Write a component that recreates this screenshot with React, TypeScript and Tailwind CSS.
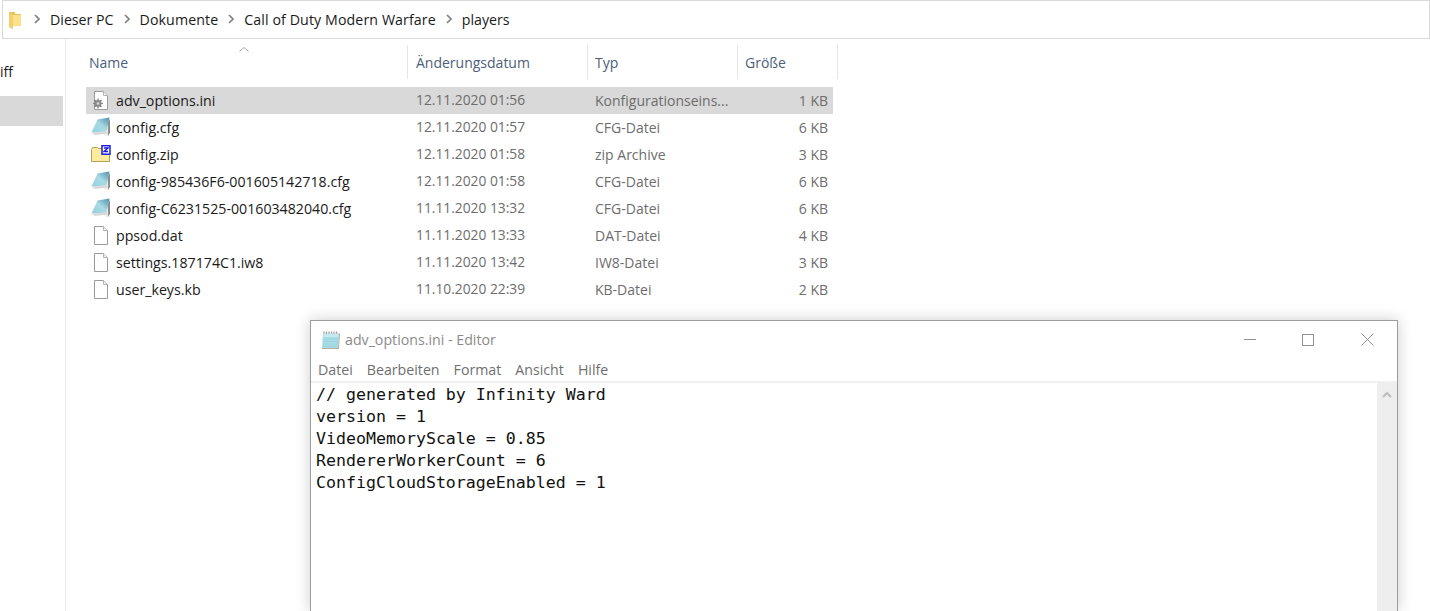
import React from 'react';

type FileKind = 'ini' | 'cfg' | 'zip' | 'blank';

const files: { name: string; date: string; type: string; size: string; kind: FileKind }[] = [
  { name: 'adv_options.ini', date: '12.11.2020 01:56', type: 'Konfigurationseins...', size: '1 KB', kind: 'ini' },
  { name: 'config.cfg', date: '12.11.2020 01:57', type: 'CFG-Datei', size: '6 KB', kind: 'cfg' },
  { name: 'config.zip', date: '12.11.2020 01:58', type: 'zip Archive', size: '3 KB', kind: 'zip' },
  { name: 'config-985436F6-001605142718.cfg', date: '12.11.2020 01:58', type: 'CFG-Datei', size: '6 KB', kind: 'cfg' },
  { name: 'config-C6231525-001603482040.cfg', date: '11.11.2020 13:32', type: 'CFG-Datei', size: '6 KB', kind: 'cfg' },
  { name: 'ppsod.dat', date: '11.11.2020 13:33', type: 'DAT-Datei', size: '4 KB', kind: 'blank' },
  { name: 'settings.187174C1.iw8', date: '11.11.2020 13:42', type: 'IW8-Datei', size: '3 KB', kind: 'blank' },
  { name: 'user_keys.kb', date: '11.10.2020 22:39', type: 'KB-Datei', size: '2 KB', kind: 'blank' },
];

const editorLines = [
  '// generated by Infinity Ward',
  'version = 1',
  'VideoMemoryScale = 0.85',
  'RendererWorkerCount = 6',
  'ConfigCloudStorageEnabled = 1',
];

const Chevron = () => (
  <svg width="6" height="10" viewBox="0 0 6 10" className="mx-[10px] shrink-0">
    <path d="M1 1l4 4-4 4" fill="none" stroke="#808080" strokeWidth="1.7" />
  </svg>
);

const FolderIcon = () => (
  <svg width="14" height="18" viewBox="0 0 14 18">
    <path d="M1 1h6v2h6v12H5v3l-4-2z" fill="#e9c35c" />
    <path d="M5 4h8v11H5z" fill="#fde08a" />
    <path d="M1 1l4 3v14l-4-2z" fill="#f5cf6b" />
  </svg>
);

// tilted notepad used for the .cfg files
const PadIcon = () => (
  <svg width="20" height="20" viewBox="0 0 20 20">
    <defs>
      <linearGradient id="pad" x1="0" y1="1" x2="1" y2="0">
        <stop offset="0" stopColor="#8fd0dc" />
        <stop offset="0.5" stopColor="#a9dbe6" />
        <stop offset="1" stopColor="#4d8eaa" />
      </linearGradient>
    </defs>
    <path d="M12 16l3 3.500 2.500-1L18.500 4l-3 2z" fill="#f2efe2" />
    <path d="M17 5l2-3v14l-2 3z" fill="#8d8d8d" />
    <path d="M.5 15.500L6.500 2.500 18.500.5 15.500 14.500z" fill="url(#pad)" />
    <path d="M.5 15.500l15-1 1.500 2-13 1.500z" fill="#d8d8d8" />
  </svg>
);

// upright notepad of the Editor title bar
const EditorIcon = () => (
  <svg width="21" height="20" viewBox="0 0 21 20">
    <path d="M3 3h16l-1 15H2z" fill="#a9dde6" />
    <path d="M3 3h16l-.3 4H2.700z" fill="#c6e9ee" />
    <path d="M3 9h15M3 11.500h15M3 14h15M2.500 16.500h15" stroke="#9ad4df" strokeWidth="1" />
    <path d="M4 1.500v2M6.500 1.500v2M9 1.500v2M11.500 1.500v2M14 1.500v2M16.500 1.500v2" stroke="#9a9a9a" strokeWidth="1.200" />
    <path d="M19 3l1 .5L19 19H2v-1h16z" fill="#b5ae9a" />
  </svg>
);

const PageIcon = ({ gear }: { gear?: boolean }) => (
  <svg width="16" height="19" viewBox="0 0 16 19">
    <path d="M1.500 .5h9l4 4v14h-13z" fill="#fff" stroke="#9b9b9b" />
    <path d="M10.500 .5v4h4" fill="#f1f1f1" stroke="#b5b5b5" />
    {gear && (
      <g>
        <circle cx="5" cy="12.500" r="3.600" fill="#8d8d8d" />
        <circle cx="5" cy="12.500" r="1.300" fill="#d9d9d9" />
        <path d="M5 7.600v2M5 15.400v2M.1 12.500h2M7.900 12.500h2M1.500 9l1.500 1.500M8.500 16L7 14.500M8.500 9L7 10.500M1.500 16L3 14.500" stroke="#7a7a7a" strokeWidth="1.200" />
      </g>
    )}
  </svg>
);

const ZipIcon = () => (
  <svg width="20" height="18" viewBox="0 0 20 18">
    <path d="M.5 4.500l1-2h5l1 1h11v13H.5z" fill="#fbeb9c" stroke="#b3a15a" />
    <rect x="11" y=".7" width="8" height="8.500" fill="#fff" stroke="#1c1ce0" strokeWidth="1.500" />
    <path d="M13 3h4l-4 3.500h4" fill="none" stroke="#1c1ce0" strokeWidth="1.400" />
  </svg>
);

const FileIcon = ({ kind }: { kind: FileKind }) => {
  if (kind === 'cfg') return <PadIcon />;
  if (kind === 'zip') return <ZipIcon />;
  return <PageIcon gear={kind === 'ini'} />;
};

const HeaderCell = ({ label, className }: { label: string; className: string }) => (
  <div className={`flex h-[34px] items-center border-r border-[#e5e5e5] text-[14px] text-[#4c607a] ${className}`}>{label}</div>
);

const EditorWindow = () => (
  <div className="absolute left-[310px] top-[320px] flex h-[291px] w-[1088px] flex-col border-x border-t border-[#9c9c9c] bg-white shadow-[0_0_14px_rgba(0,0,0,0.2)]">
    <div className="flex h-[37px] shrink-0 items-center pl-[9px]">
      <EditorIcon />
      <span className="ml-[4px] text-[14.2px] text-[#8b8b8b]">adv_options.ini - Editor</span>
      <div className="ml-auto flex items-center">
        <div className="h-px w-[12px] bg-[#8f8f8f]" />
        <div className="ml-[46px] h-[12px] w-[12px] border border-[#8f8f8f]" />
        <svg width="13" height="13" viewBox="0 0 13 13" className="ml-[47px] mr-[23px]">
          <path d="M.5.5l12 12M12.500.5l-12 12" stroke="#8f8f8f" strokeWidth="1" fill="none" />
        </svg>
      </div>
    </div>
    <div className="flex h-[23px] shrink-0 items-center gap-[14px] pl-[7px] pt-[1px] text-[14.2px] text-[#6f6f6f]">
      <span>Datei</span>
      <span>Bearbeiten</span>
      <span>Format</span>
      <span>Ansicht</span>
      <span>Hilfe</span>
    </div>
    <div className="flex min-h-0 flex-1 border-t-2 border-[#f0f0f0]">
      <div className="flex-1 pl-[5px] pt-[1px] font-['DejaVu_Sans_Mono',monospace] text-[16.6px] leading-[22px] text-[#111]">
        {editorLines.map((line) => (
          <div key={line} className="whitespace-pre">{line}</div>
        ))}
      </div>
      <div className="flex w-[20px] shrink-0 justify-center bg-[#eeeeee] pt-[8px]">
        <svg width="10" height="7" viewBox="0 0 10 7">
          <path d="M1 6l4-4 4 4" fill="none" stroke="#bcbcbc" strokeWidth="2" />
        </svg>
      </div>
    </div>
  </div>
);

export default function App() {
  return (
    <div className="relative h-[611px] w-[1430px] overflow-hidden bg-white font-['Open_Sans',sans-serif] text-[#1a1a1a]">
      <div className="ml-[2px] flex h-[39px] items-center border border-[#d9d9d9] pl-[5px] text-[14.2px]">
        <FolderIcon />
        <div className="ml-[2px] flex items-center">
          <Chevron />
          <span>Dieser PC</span>
          <Chevron />
          <span className="tracking-[0.1px]">Dokumente</span>
          <Chevron />
          <span className="tracking-[0.1px]">Call of Duty Modern Warfare</span>
          <Chevron />
          <span>players</span>
        </div>
      </div>

      <div className="flex h-[572px]">
        <div className="w-[66px] shrink-0 border-r border-[#ececec] pt-[23px] text-[14px]">
          <div className="h-[34px] leading-[20px]">iff</div>
          <div className="h-[30px] w-[63px] bg-[#d9d9d9]" />
        </div>

        <div className="flex-1 pl-[20px] pt-[6px]">
          <div className="relative flex">
            <svg width="10" height="5" viewBox="0 0 10 5" className="absolute left-[153px] top-[2px]">
              <path d="M.5 4.500L5 .5l4.500 4" fill="none" stroke="#a8a8a8" />
            </svg>
            <HeaderCell label="Name" className="w-[322px] pl-[3px]" />
            <HeaderCell label="Änderungsdatum" className="w-[180px] pl-[8px]" />
            <HeaderCell label="Typ" className="w-[150px] pl-[7px]" />
            <HeaderCell label="Größe" className="w-[100px] pl-[7px]" />
          </div>

          <div className="mt-[8px] w-[747px]">
            {files.map((file, i) => (
              <div key={file.name} className={`flex h-[27px] items-center text-[14.2px] ${i === 0 ? 'bg-[#d9d9d9]' : ''}`}>
                <div className="flex w-[330px] items-center">
                  <div className="flex w-[30px] justify-center">
                    <FileIcon kind={file.kind} />
                  </div>
                  <span>{file.name}</span>
                </div>
                <span className="w-[179px] text-[13.8px] text-[#6d6d6d]">{file.date}</span>
                <span className="w-[151px] text-[14px] text-[#6d6d6d]">{file.type}</span>
                <span className="flex-1 pr-[5px] text-right text-[14px] text-[#6d6d6d]">{file.size}</span>
              </div>
            ))}
          </div>
        </div>
      </div>

      <EditorWindow />
    </div>
  );
}
